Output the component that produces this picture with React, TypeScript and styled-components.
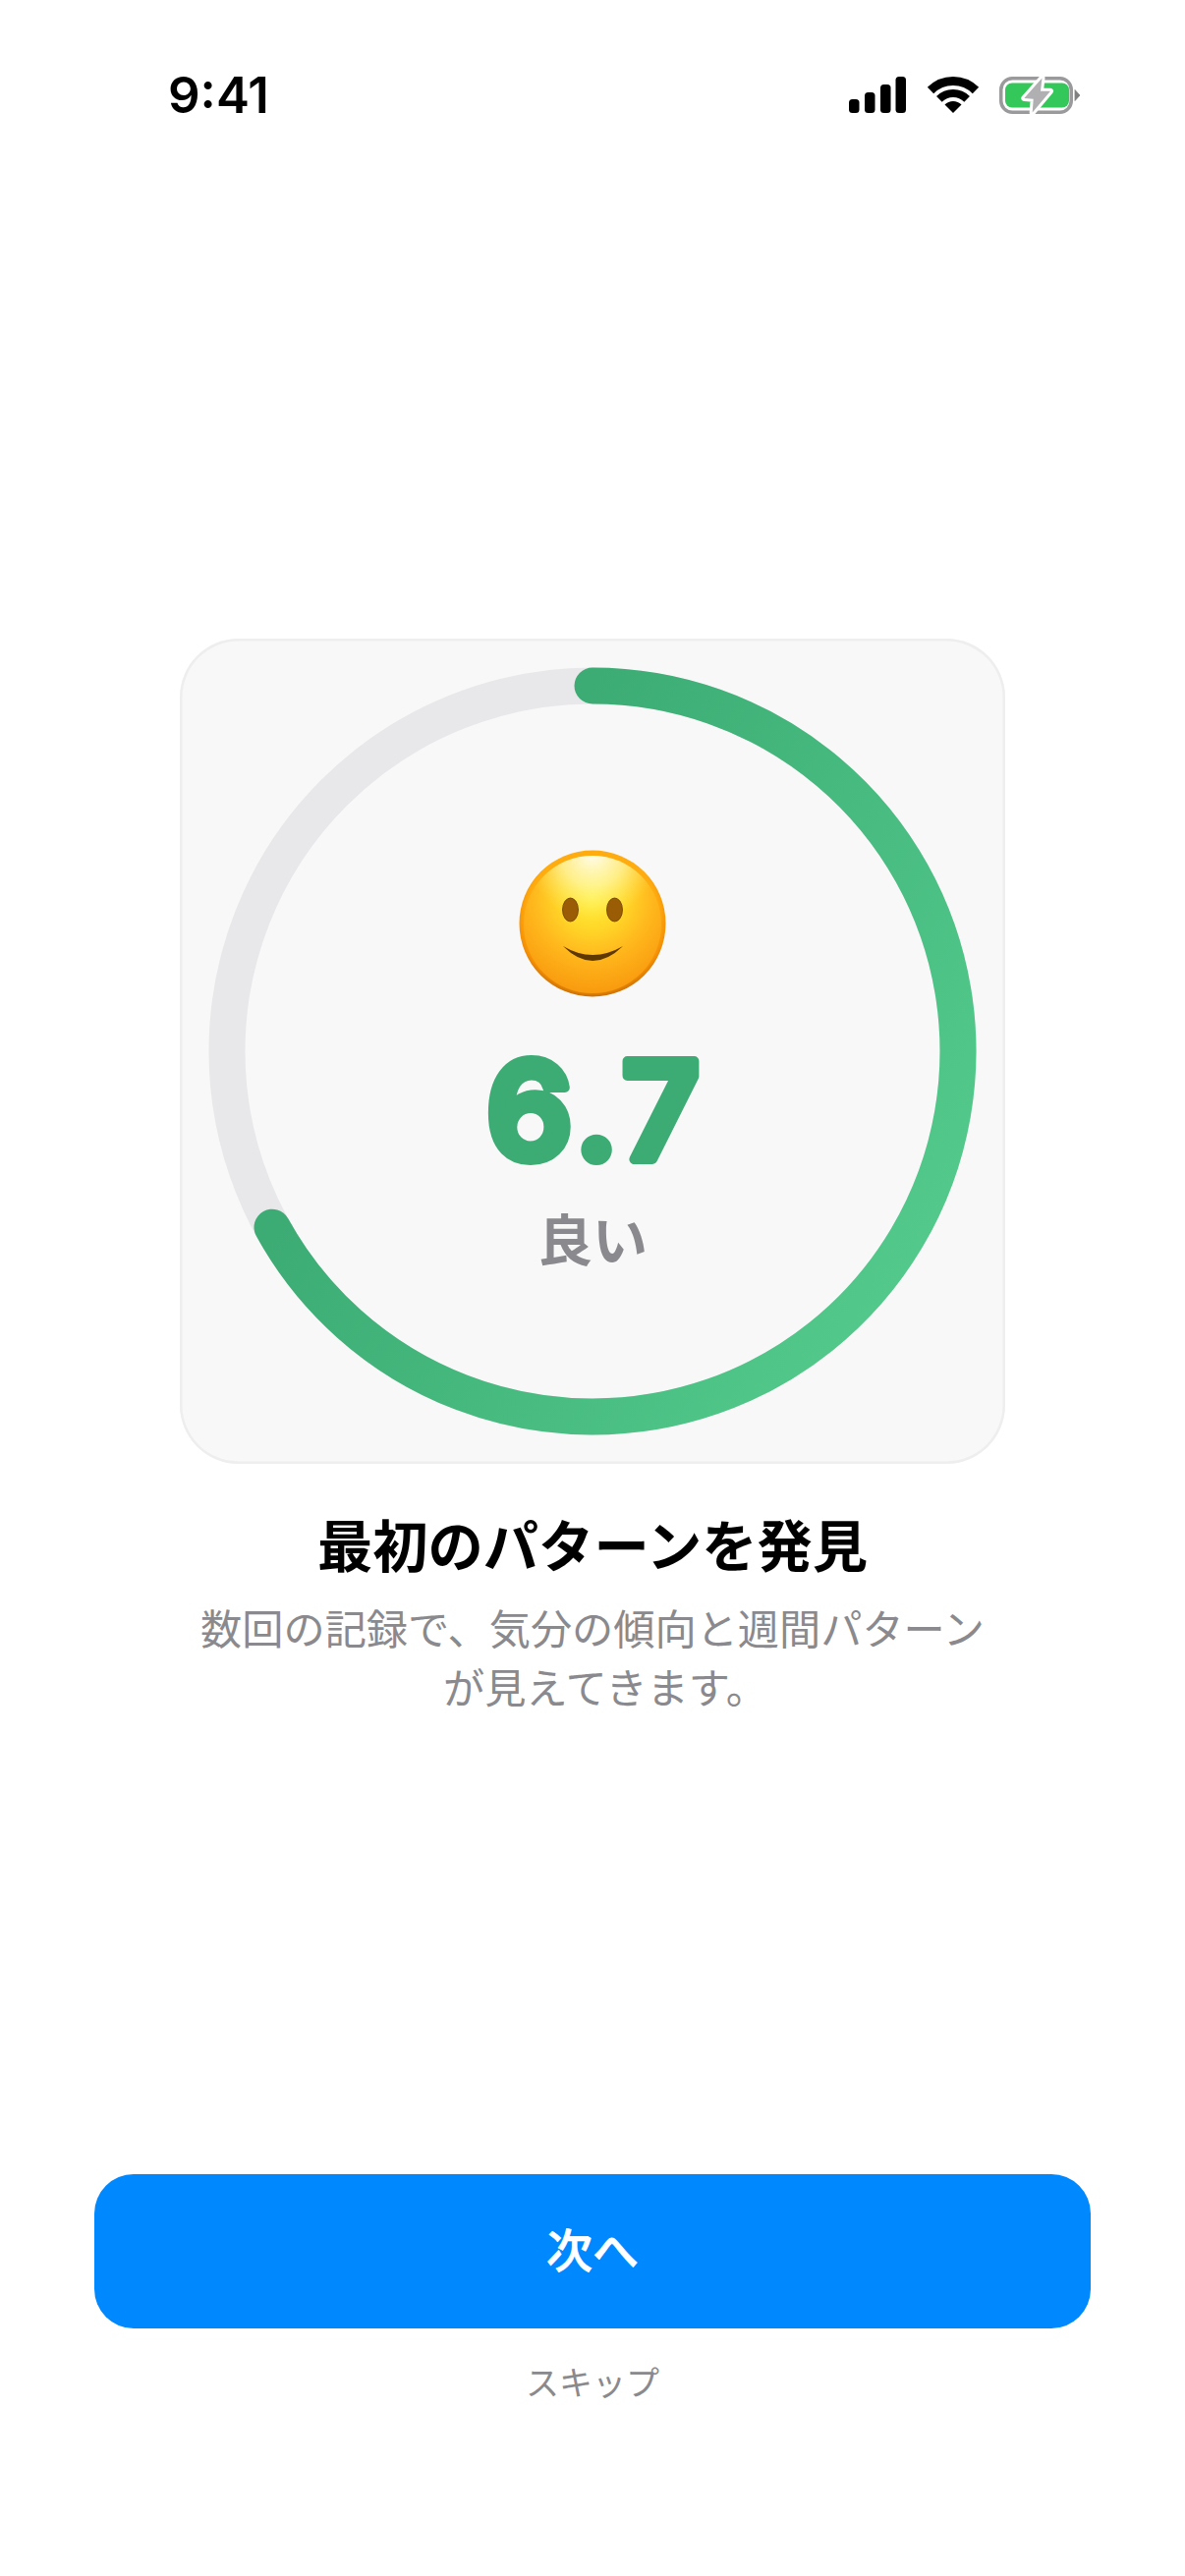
import React from "react";
import styled, { createGlobalStyle } from "styled-components";

const Global = createGlobalStyle`
  html, body { margin: 0; padding: 0; background: #fff; }
  * { box-sizing: border-box; }
`;

const JP = `Inter, "Noto Sans CJK JP", "Noto Sans", sans-serif`;

const Page = styled.div`
  width: 1206px;
  height: 2622px;
  background: #fff;
  display: flex;
  flex-direction: column;
  align-items: center;
  font-family: ${JP};
  overflow: hidden;
`;

const StatusBar = styled.header`
  width: 100%;
  height: 190px;
  padding: 66px 107px 0 171px;
  display: flex;
  justify-content: space-between;
  align-items: flex-start;
  flex: none;
`;

const Clock = styled.span`
  font-size: 51px;
  line-height: 60px;
  font-weight: 600;
  color: #000;
  margin-top: 1px;
`;

const StatusIcons = styled.div`
  display: flex;
  align-items: flex-start;
  margin-top: 12px;
`;

const StatusIcon = styled.svg<{ $gap?: number }>`
  display: block;
  overflow: visible;
  margin-left: ${(p) => p.$gap ?? 0}px;
`;

const Hero = styled.section`
  flex: none;
  margin-top: 460px;
  width: 840px;
  height: 840px;
  border-radius: 60px;
  background: #f8f8f8;
  box-shadow: inset 0 0 0 2.5px #eeeeef;
  position: relative;
  display: flex;
  flex-direction: column;
  align-items: center;
`;

const Ring = styled.svg`
  position: absolute;
  inset: 0;
  display: block;
`;

const Face = styled.svg`
  display: block;
  margin-top: 215px;
  flex: none;
`;

const Score = styled.svg`
  display: block;
  margin-top: 60px;
  flex: none;
  overflow: visible;
`;

const ScoreText = styled.text`
  font-family: Inter, sans-serif;
  font-size: 137px;
  font-weight: 600;
  letter-spacing: 7px;
  fill: #3cac74;
  stroke: #3cac74;
  stroke-width: 10px;
  stroke-linejoin: round;
  text-anchor: middle;
`;

const ScoreLabel = styled.div`
  margin-top: 45px;
  font-size: 56px;
  line-height: 66px;
  font-weight: 700;
  color: #8a8a8e;
`;

const Title = styled.h1`
  margin: 53px 0 0;
  font-size: 56.3px;
  line-height: 64px;
  font-weight: 700;
  color: #000;
  text-align: center;
`;

const Body = styled.p`
  margin: 22px 0 0;
  width: 830px;
  font-size: 42.2px;
  line-height: 60px;
  font-weight: 400;
  color: #8a8a8e;
  text-align: center;
`;

const BodyLine = styled.span<{ $indent?: number }>`
  display: block;
  padding-left: ${(p) => p.$indent ?? 0}px;
`;

const Actions = styled.footer`
  margin-top: auto;
  width: 100%;
  padding: 0 96px 172px;
  display: flex;
  flex-direction: column;
  align-items: center;
`;

const NextButton = styled.button`
  width: 100%;
  height: 157px;
  border: 0;
  padding: 0 0 8px;
  border-radius: 40px;
  background: #0088ff;
  color: #fff;
  font-family: ${JP};
  font-size: 47px;
  font-weight: 500;
  -webkit-text-stroke: 0.7px #fff;
  display: flex;
  align-items: center;
  justify-content: center;
`;

const SkipButton = styled.button`
  margin-top: 32px;
  border: 0;
  padding: 0;
  background: transparent;
  color: #8a8a8e;
  font-family: ${JP};
  font-size: 34px;
  line-height: 48px;
  font-weight: 400;
`;

const CX = 420;
const R = 372;
const progress = 0.67;
const endAngle = progress * 2 * Math.PI;
const endX = CX + R * Math.sin(endAngle);
const endY = CX - R * Math.cos(endAngle);
const arcPath = `M${CX} ${CX - R} A${R} ${R} 0 1 1 ${endX.toFixed(2)} ${endY.toFixed(2)}`;

const SignalIcon = () => (
  <StatusIcon width="58" height="38" viewBox="0 0 58 38">
    <rect x="0" y="23" width="10.5" height="14" rx="3.5" fill="#000" />
    <rect x="16" y="16" width="10.5" height="21" rx="3.5" fill="#000" />
    <rect x="32" y="8" width="10.5" height="29" rx="3.5" fill="#000" />
    <rect x="47.5" y="0" width="10.5" height="37" rx="3.5" fill="#000" />
  </StatusIcon>
);

const WifiIcon = () => (
  <StatusIcon $gap={23} width="50" height="38" viewBox="0 0 50 38">
    <path d="M2.02 14.02 A32.5 32.5 0 0 1 47.98 14.02" fill="none" stroke="#000" strokeWidth="9" />
    <path d="M10.86 22.86 A20 20 0 0 1 39.14 22.86" fill="none" stroke="#000" strokeWidth="8" />
    <path d="M25 37 L16.5 28.5 A12 12 0 0 1 33.5 28.5 Z" fill="#000" />
  </StatusIcon>
);

const BatteryIcon = () => (
  <StatusIcon $gap={22} width="82" height="38" viewBox="0 0 82 38">
    <rect x="1.75" y="1.75" width="71.5" height="34.5" rx="11.5" fill="none" stroke="#9a9a9c" strokeWidth="3.5" />
    <rect x="6" y="6.5" width="65" height="25" rx="7" fill="#34c759" />
    <path d="M77 13.5 L82 19 L77 24.5 Z" fill="#808082" stroke="#808082" strokeWidth="0.8" strokeLinejoin="round" />
    <path
      d="M43.5 1.5 L25.3 22 L34.7 22.7 L33.7 36.5 L52 14.7 L42 14.7 Z"
      fill="#b0b0b2"
      stroke="#fff"
      strokeWidth="6"
      strokeLinejoin="round"
      paintOrder="stroke"
    />
  </StatusIcon>
);

const SmileyFace = () => (
  <Face width="150" height="150" viewBox="-75 -75 150 150">
    <defs>
      <radialGradient id="faceRim" cx="50%" cy="44%" r="56%">
        <stop offset="0.8" stopColor="#ffac10" />
        <stop offset="0.92" stopColor="#f48f05" />
        <stop offset="1" stopColor="#c96f03" />
      </radialGradient>
      <radialGradient id="faceFill" cx="50%" cy="30%" r="72%">
        <stop offset="0" stopColor="#fff03e" />
        <stop offset="0.3" stopColor="#ffd92a" />
        <stop offset="0.62" stopColor="#ffb61c" />
        <stop offset="1" stopColor="#f8980d" />
      </radialGradient>
      <radialGradient id="faceShine" cx="50%" cy="-2%" r="48%">
        <stop offset="0" stopColor="#fffef2" stopOpacity="1" />
        <stop offset="0.5" stopColor="#fff9b0" stopOpacity="0.7" />
        <stop offset="1" stopColor="#fff06a" stopOpacity="0" />
      </radialGradient>
    </defs>
    <circle cx="0" cy="0" r="74.5" fill="url(#faceRim)" />
    <circle cx="0" cy="1" r="70" fill="url(#faceFill)" />
    <circle cx="0" cy="1" r="70" fill="url(#faceShine)" />
    <ellipse cx="-22.5" cy="-14" rx="8" ry="12" fill="#9a5d06" stroke="#6c3f02" strokeWidth="0.8" />
    <ellipse cx="22.5" cy="-14" rx="8" ry="12" fill="#9a5d06" stroke="#6c3f02" strokeWidth="0.8" />
    <path d="M-30 23 Q0 53 31 23 Q0 41 -30 23 Z" fill="#5f3800" />
  </Face>
);

export default function App() {
  return (
    <>
      <Global />
      <Page>
        <StatusBar>
          <Clock>9:41</Clock>
          <StatusIcons>
            <SignalIcon />
            <WifiIcon />
            <BatteryIcon />
          </StatusIcons>
        </StatusBar>
        <Hero>
          <Ring width="840" height="840" viewBox="0 0 840 840">
            <defs>
              <linearGradient id="ringGrad" gradientUnits="userSpaceOnUse" x1="420" y1="48" x2="1005" y2="386.5">
                <stop offset="0" stopColor="#3cac74" />
                <stop offset="1" stopColor="#56ce8f" />
              </linearGradient>
            </defs>
            <circle cx={CX} cy={CX} r={R} fill="none" stroke="#e8e8ea" strokeWidth="37" />
            <path d={arcPath} fill="none" stroke="url(#ringGrad)" strokeWidth="37" strokeLinecap="round" />
          </Ring>
          <SmileyFace />
          <Score width="240" height="110" viewBox="0 0 240 110">
            <ScoreText x="124" y="105">6.7</ScoreText>
          </Score>
          <ScoreLabel>良い</ScoreLabel>
        </Hero>
        <Title>最初のパターンを発見</Title>
        <Body>
          <BodyLine>数回の記録で、気分の傾向と週間パターン</BodyLine>
          <BodyLine $indent={26}>が見えてきます。</BodyLine>
        </Body>
        <Actions>
          <NextButton>次へ</NextButton>
          <SkipButton>スキップ</SkipButton>
        </Actions>
      </Page>
    </>
  );
}
